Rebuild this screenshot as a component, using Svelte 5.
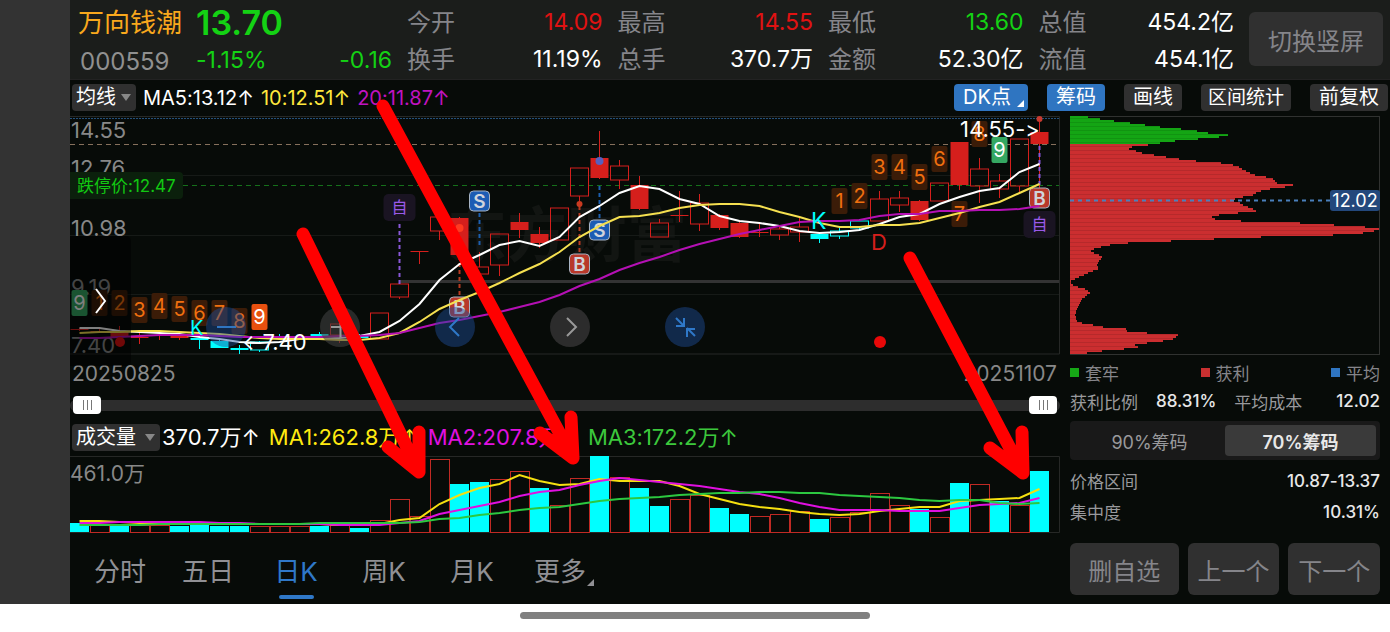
<style>
  :global(body) {
    margin: 0;
    background: #fff;
  }

  .page {
    font-family: Inter, "Noto Sans CJK SC", sans-serif;
    font-variant-ligatures: none;
    color: #fff;
  }

  .page button,
  .page select {
    font-family: inherit;
    border: none;
    margin: 0;
    padding: 0;
    color: #fff;
    background: #303030;
    white-space: nowrap;
  }

  .screen {
    display: flex;
    background: #333;
    padding-left: 70px;
  }

  .app {
    position: relative;
    flex: 1;
    min-width: 0;
    background: #070b08;
  }

  .header {
    display: grid;
    grid-template-columns: 103px 196px repeat(4, 1fr) 134px;
    column-gap: 15px;
    height: 80px;
    box-sizing: border-box;
    padding: 4px 7px 0 8px;
    background: #1b1d1b;
    border-bottom: 1px solid #222;
    font-size: 23px;
    line-height: 37px;
    white-space: nowrap;
  }

  .header dl,
  .header dd {
    margin: 0;
  }

  .header dl div,
  .change {
    display: flex;
    justify-content: space-between;
  }

  .header dt {
    color: #85858a;
    font-size: 24px;
  }

  .name {
    color: #f9a81d;
    font-size: 26px;
  }

  .code {
    padding: 2px 0 0 2px;
    color: #909090;
    font-size: 24px;
  }

  .price {
    font-size: 34px;
    font-weight: 600;
  }

  .down {
    color: #14d214;
  }

  .change {
    padding-top: 1px;
  }

  .up {
    color: #e01212;
  }

  .page .switch {
    height: 54px;
    margin-top: 8px;
    border-radius: 6px;
    color: #85858a;
    font-size: 24px;
  }

  .toolbar {
    display: flex;
    align-items: center;
    gap: 19px;
    height: 35px;
    padding: 0 2px;
    font-size: 20px;
  }

  .averages {
    display: flex;
    align-items: center;
    gap: 7px;
    flex: 1;
    white-space: nowrap;
  }

  .picker {
    position: relative;
    display: flex;
  }

  .picker select {
    appearance: none;
    height: 27px;
    padding: 0 20px 0 4px;
    border-radius: 4px;
    font-size: 20px;
    line-height: 27px;
  }

  .picker::after {
    content: "";
    position: absolute;
    right: 5px;
    top: 10px;
    border: 5px solid transparent;
    border-top: 7px solid #888;
    border-bottom: none;
    pointer-events: none;
  }

  .yellow {
    color: #ffe83d;
  }

  .magenta {
    color: #c013c0;
  }

  .toolbar > button {
    position: relative;
    height: 27px;
    padding: 0 9px;
    border-radius: 4px;
    font-size: 20px;
    line-height: 27px;
  }

  .toolbar > button.wide {
    padding: 0 7px;
    font-size: 19px;
  }

  .toolbar > button.active {
    background: #2f75c1;
  }

  .toolbar > button.corner {
    padding-right: 17px;
  }

  .corner::after {
    content: "";
    position: absolute;
    right: 4px;
    bottom: 4px;
    border-left: 7px solid transparent;
    border-bottom: 7px solid currentColor;
  }

  .content {
    display: grid;
    grid-template-columns: 1fr 330px;
  }

  .main {
    min-width: 0;
  }

  svg {
    display: block;
  }

  .chart {
    position: relative;
  }

  .chart > svg,
  .volume,
  .chips {
    width: 100%;
  }

  .axis {
    fill: #888;
    font-size: 22px;
  }

  .axis.small {
    font-size: 21px;
  }

  .watermark {
    fill: #121512;
    font-size: 60px;
    font-weight: 700;
  }

  .mark {
    font-size: 22px;
  }

  .badge {
    font-size: 20px;
    text-anchor: middle;
  }

  .signal {
    font-size: 19px;
    font-weight: 600;
    text-anchor: middle;
  }

  .line {
    fill: none;
    stroke-width: 2;
  }

  .page .expand {
    position: absolute;
    left: 0;
    top: 44%;
    width: 61px;
    height: 130px;
    padding-left: 22px;
    border-radius: 0 5px 5px 0;
    background: rgba(0, 0, 0, 0.5);
  }

  .chart-nav {
    position: absolute;
    left: 13.7%;
    top: 192px;
    width: 50.4%;
    display: flex;
    justify-content: space-between;
  }

  .chart-nav button {
    width: 40px;
    height: 40px;
    border-radius: 50%;
    background: #2c2c2c;
  }

  .chart-nav button.blue {
    background: rgba(30, 78, 155, 0.45);
  }

  .chart-nav button.dim {
    background: rgba(64, 64, 64, 0.6);
  }

  .range {
    position: relative;
    height: 30px;
  }

  .range::before {
    content: "";
    position: absolute;
    left: 0;
    right: 0;
    top: 10px;
    height: 11px;
    border-radius: 6px;
    background: #2d2d2d;
  }

  .range input {
    appearance: none;
    position: absolute;
    left: 3px;
    top: 0;
    width: calc(100% - 6px);
    height: 30px;
    margin: 0;
    background: none;
    pointer-events: none;
  }

  .range input::-webkit-slider-thumb {
    appearance: none;
    width: 28px;
    height: 18px;
    border-radius: 4px;
    background: repeating-linear-gradient(90deg, #777 0 1px, #fff 1px 4px) 10px 4px / 9px 10px no-repeat #fff;
    pointer-events: auto;
  }

  .vol-head {
    display: flex;
    align-items: center;
    gap: 9px;
    height: 35px;
    box-sizing: border-box;
    padding: 0 2px 1px;
    font-size: 22px;
    line-height: 30px;
    white-space: nowrap;
  }

  .vol-head .picker {
    margin-right: -7px;
  }

  .vol-head .picker select {
    padding-right: 24px;
  }

  .vol-head .yellow {
    color: #ffea10;
  }

  .vol-head .magenta {
    color: #e010e0;
  }

  .vol-head .green {
    color: #3cc83c;
  }

  .tabs {
    display: flex;
    height: 70px;
    padding-left: 6px;
  }

  .tabs button {
    position: relative;
    width: 88px;
    background: none;
    color: #909094;
    font-size: 26px;
  }

  .tabs button.active {
    color: #2f78c8;
  }

  .tabs button.active::before {
    content: "";
    position: absolute;
    left: 27px;
    bottom: 5px;
    width: 35px;
    height: 4px;
    border-radius: 2px;
    background: #2f78c8;
  }

  .tabs .corner::after {
    right: 10px;
    bottom: 18px;
  }

  .side {
    padding: 0 10px;
    font-size: 17px;
    white-space: nowrap;
  }

  .legend,
  .row {
    display: flex;
    align-items: center;
    justify-content: space-between;
    color: #99999c;
  }

  .legend {
    height: 34px;
    color: #85858a;
  }

  .legend span {
    display: flex;
    align-items: center;
    gap: 6px;
  }

  .legend i {
    width: 9px;
    height: 9px;
    background: #16a816;
  }

  .legend i.red {
    background: #c83030;
  }

  .legend i.blue {
    background: #2f75c1;
  }

  .row {
    height: 31px;
  }

  .row.first {
    height: 24px;
    gap: 18px;
  }

  .row b {
    color: #e8e8e8;
    font-weight: 500;
  }

  .row b:last-child {
    margin-left: auto;
  }

  .segmented {
    display: flex;
    margin: 8px 0 5px;
    padding: 4px;
    border-radius: 4px;
    background: #191919;
  }

  .segmented button {
    flex: 1;
    height: 31px;
    border-radius: 4px;
    background: none;
    color: #99999c;
    font-size: 18px;
  }

  .segmented button.active {
    background: #3a3a3a;
    color: #e8e8e8;
    font-weight: 600;
  }

  .actions {
    display: grid;
    grid-template-columns: 109fr 92fr 92fr;
    gap: 9px;
    margin-top: 16px;
  }

  .actions button {
    height: 52px;
    border-radius: 6px;
    color: #85858a;
    font-size: 24px;
  }

  .arrows {
    position: absolute;
    left: 0;
    top: 0;
    width: 100%;
    fill: none;
    stroke: #f00;
    stroke-width: 13;
    stroke-linecap: round;
    stroke-linejoin: round;
    pointer-events: none;
  }

  .home {
    display: flex;
    justify-content: center;
    height: 28px;
  }

  .home div {
    width: 350px;
    height: 7px;
    margin-top: 8px;
    border-radius: 4px;
    background: #808080;
  }
</style>

<script>
  const STEP = 20;
  const START = 79.5;
  const RED = '#d51f1c';
  const CYAN = '#00ffff';

  let period = '日K';
  let share = 70;

  const periods = ['分时', '五日', '日K', '周K', '月K', '更多'];

  const quotes = [
    [['今开', '14.09', 'up'], ['换手', '11.19%', '']],
    [['最高', '14.55', 'up'], ['总手', '370.7万', '']],
    [['最低', '13.60', 'down'], ['金额', '52.30亿', '']],
    [['总值', '454.2亿', ''], ['流值', '454.1亿', '']]
  ];

  // high, top, bottom, low, kind (upper case is filled, c is cyan)
  const candles = [
    [328, 329, 330, 331, 'R'], [329, 331, 332, 333, 'R'], [326, 331, 337, 340, 'R'], [333, 337, 338, 344, 'R'],
    [330, 335, 336, 340, 'R'], [333, 335, 338, 340, 'R'], [333, 338, 340, 349, 'C'], [340, 341, 348, 348, 'C'],
    [345, 348, 350, 354, 'C'], [341, 342, 350, 352, 'c'], [334, 336, 338, 339, 'C'], [334, 336, 337, 338, 'R'],
    [332, 334, 336, 337, 'C'], [323, 324, 335, 343, 'r'], [334, 336, 338, 339, 'C'], [313, 313, 339, 339, 'r'],
    [284, 284, 297, 299, 'r'], [251, 251, 252, 264, 'R'], [217, 217, 231, 240, 'r'], [217, 218, 255, 256, 'R'],
    [252, 267, 274, 275, 'r'], [234, 234, 265, 276, 'r'], [213, 222, 230, 238, 'R'], [227, 234, 243, 248, 'R'],
    [208, 208, 240, 240, 'r'], [168, 168, 196, 204, 'r'], [131, 158, 178, 179, 'R'], [160, 166, 180, 189, 'r'],
    [176, 185, 209, 210, 'R'], [219, 223, 237, 237, 'r'], [191, 215, 216, 222, 'R'], [194, 203, 224, 231, 'r'],
    [214, 215, 228, 230, 'R'], [222, 223, 237, 238, 'R'], [224, 232, 233, 237, 'R'], [226, 229, 235, 240, 'r'],
    [218, 227, 232, 242, 'r'], [232, 234, 239, 243, 'C'], [226, 231, 236, 239, 'c'], [219, 221, 228, 231, 'c'],
    [191, 199, 221, 221, 'r'], [191, 198, 205, 212, 'r'], [200, 201, 220, 221, 'R'], [183, 183, 201, 201, 'r'],
    [142, 142, 185, 190, 'R'], [158, 169, 186, 203, 'r'], [174, 181, 189, 198, 'r'], [139, 139, 186, 192, 'r'],
    [119, 132, 144, 188, 'R']
  ];

  const ma5 = [328, 328, 331, 332, 333, 334, 337, 339, 342, 343, 342, 339, 339, 338, 336, 332, 321, 304, 280, 264, 255, 245, 241, 246, 237, 217, 206, 193, 186, 189, 199, 204, 216, 221, 223, 226, 231, 233, 232, 230, 224, 217, 214, 204, 197, 191, 188, 172, 164];
  const ma10 = [333, 332, 332, 331, 331, 332, 333, 334, 336, 338, 339, 339, 339, 340, 340, 338, 333, 322, 309, 300, 292, 283, 273, 264, 252, 237, 226, 217, 216, 213, 208, 205, 204, 204, 206, 212, 217, 223, 227, 227, 225, 225, 223, 218, 213, 207, 202, 193, 184];
  const ma20 = [338, 338, 337, 336, 335, 335, 335, 336, 337, 337, 337, 337, 337, 336, 336, 335, 333, 328, 323, 320, 316, 312, 307, 302, 295, 286, 279, 270, 263, 257, 250, 244, 239, 234, 230, 226, 222, 221, 221, 220, 216, 214, 214, 211, 211, 210, 210, 209, 206];

  const volumes = [523, 525, 525, 525, 525, 526, 524, 526, 526, 526, 526, 526, 526, 525, 528, 520, 499, 516, 459, 484, 482, 479, 471, 488, 505, 478, 456, 477, 488, 506, 499, 495, 508, 514, 516, 514, 511, 519, 517, 512, 493, 505, 509, 517, 483, 484, 501, 505, 471];
  const falling = [0, 2, 5, 6, 7, 8, 12, 14, 19, 20, 23, 26, 28, 29, 32, 33, 37, 42, 44, 46, 48];
  const vma1 = [521, 521, 522, 523, 524, 524, 524, 524, 524, 524, 524, 524, 524, 525, 525, 524, 520, 518, 504, 495, 488, 484, 475, 481, 485, 484, 479, 481, 481, 481, 486, 494, 499, 504, 507, 509, 512, 514, 515, 514, 511, 509, 507, 507, 501, 500, 499, 498, 489];
  const vma2 = [523, 523, 522, 522, 522, 522, 522, 523, 523, 524, 524, 524, 524, 525, 525, 525, 523, 521, 514, 510, 506, 502, 496, 492, 490, 485, 481, 478, 480, 482, 484, 486, 489, 492, 494, 498, 503, 507, 510, 510, 510, 511, 511, 511, 508, 505, 504, 503, 498];
  const vma3 = [525, 525, 525, 525, 524, 524, 524, 524, 524, 524, 524, 524, 523, 523, 523, 523, 523, 522, 519, 518, 515, 513, 510, 508, 507, 504, 501, 499, 498, 497, 495, 494, 493, 493, 492, 492, 493, 493, 495, 496, 497, 498, 500, 501, 500, 500, 503, 504, 503];

  // x, centre y, digit, style
  const counts = [
    [79.5, 303, 9, 'green'], [99.5, 303, 1], [119.5, 303, 2], [139.5, 310, 3], [159.5, 306, 4], [179.5, 309, 5],
    [199.5, 313, 6], [219.5, 313, 7], [239.5, 321, 8], [259.5, 317, 9, 'hot'],
    [839.5, 201, 1], [859.5, 196, 2], [879.5, 167, 3], [899.5, 167, 4], [919.5, 177, 5], [939.5, 159, 6],
    [959.5, 214, 7], [979.5, 134, 8], [999.5, 150, 9, 'green']
  ];

  const signals = [
    [479.5, 201, 'S'], [599.5, 230, 'S'], [459.5, 307, 'B'], [579.5, 264, 'B'], [1039.5, 198, 'B']
  ];

  const dashes = [
    [479.5, 213, 246, '#1c5fae'], [599.5, 186, 220, '#1c5fae'], [459.5, 228, 296, '#b83a20'],
    [579.5, 206, 254, '#b83a20'], [399.5, 224, 284, '#8a58d8'], [1039.5, 146, 188, '#8a58d8']
  ];

  const notes = [[399.5, 207], [1039.5, 224]];

  // width of the distribution at a given depth
  const profile = [
    [13, 0], [23, 2], [36, 4], [60, 7], [90, 11], [121, 14], [138, 17], [158, 19], [140, 21], [105, 24], [90, 26],
    [78, 28], [66, 29], [54, 32], [63, 34], [72, 37], [90, 40], [109, 43], [126, 45], [145, 46], [157, 48], [168, 50],
    [172, 53], [178, 56], [185, 59], [202, 62], [207, 67], [223, 69], [200, 72], [187, 75], [183, 78], [168, 81],
    [160, 84], [168, 86], [173, 89], [186, 94], [168, 96], [149, 98], [138, 101], [145, 103], [171, 105], [213, 106],
    [247, 108], [281, 110], [295, 111], [309, 113], [293, 116], [263, 118], [215, 119], [167, 121], [121, 123],
    [80, 125], [58, 126], [40, 128], [31, 130], [21, 133], [21, 136], [32, 140], [27, 147], [28, 152], [18, 156],
    [7, 161], [1, 164], [1, 168], [8, 171], [15, 173], [20, 176], [12, 182], [7, 191], [5, 199], [7, 206], [23, 209],
    [33, 211], [56, 213], [58, 216], [95, 218], [108, 219], [101, 223], [77, 226], [63, 228], [68, 231], [40, 233],
    [17, 236], [7, 238]
  ];

  function widthAt(y) {
    const i = profile.findIndex(p => p[1] >= y);
    if (i <= 0) {
      return profile[0][0];
    }
    const [w1, y1] = profile[i];
    const [w0, y0] = profile[i - 1];
    return w0 + (w1 - w0) * (y - y0) / (y1 - y0);
  }

  const levels = Array.from({ length: 119 }, (_, i) => {
    const y = i * 2;
    return { y, w: Math.round(Math.max(widthAt(y), widthAt(y + 1))) };
  });

  const cx = i => START + i * STEP;
  const points = list => list.map((y, i) => `${cx(i)},${y}`).join(' ');
  const isFilled = kind => kind === kind.toUpperCase();
  const tint = kind => kind.toLowerCase() === 'c' ? CYAN : RED;
  const countFill = { green: '#35a862', hot: '#e8500f' };
</script>

<div class="page">
  <div class="screen">
    <div class="app">
      <div class="header">
        <div>
          <div class="name">万向钱潮</div>
          <div class="code">000559</div>
        </div>
        <div class="down">
          <div class="price">13.70</div>
          <div class="change"><span>-1.15%</span><span>-0.16</span></div>
        </div>
        {#each quotes as column}
          <dl>
            {#each column as [label, value, tone]}
              <div>
                <dt>{label}</dt>
                <dd class={tone}>{value}</dd>
              </div>
            {/each}
          </dl>
        {/each}
        <button class="switch">切换竖屏</button>
      </div>

      <div class="toolbar">
        <div class="averages">
          <div class="picker">
            <select aria-label="均线">
              <option>均线</option>
            </select>
          </div>
          <span>MA5:13.12↑</span>
          <span class="yellow">10:12.51↑</span>
          <span class="magenta">20:11.87↑</span>
        </div>
        <button class="active corner">DK点</button>
        <button class="active">筹码</button>
        <button>画线</button>
        <button class="wide">区间统计</button>
        <button>前复权</button>
      </div>

      <div class="content">
        <div class="main">
          <div class="chart">
            <svg viewBox="70 115 990 275">
              <text class="watermark" x="447" y="257">东方财富</text>
              <g stroke="#161a17">
                <path d="M70 175.5H1059M70 235.5H1059M70 294.5H1059" />
                <path d="M70 116.5H1059.500V354H70" fill="none" stroke="#262826" />
              </g>
              <path d="M400 281.500H1059" stroke="#333" stroke-width="3" />
              <path d="M70 118.500H1059" stroke="#24507a" stroke-dasharray="2 1" />
              <path d="M70 144.500H1059" stroke="#86705c" stroke-dasharray="5 4" />
              <path d="M183 185.500H1059" stroke="#15701a" stroke-dasharray="5 4" />

              <g class="axis">
                <text x="71" y="138">14.55</text>
                <text x="71" y="176">12.76</text>
                <text x="71" y="236">10.98</text>
                <text x="71" y="295">9.19</text>
                <text x="71" y="353">7.40</text>
              </g>
              <g class="axis small">
                <text x="72" y="381">20250825</text>
                <text x="1057" y="381" text-anchor="end">20251107</text>
              </g>

              <rect x="66" y="172" width="117" height="27" rx="4" fill="#0b200c" />
              <text x="77" y="192" font-size="17" fill="#12c812">跌停价:12.47</text>

              {#each candles as [high, top, bottom, low, kind], i}
                <path d="M{cx(i)} {high}V{top}M{cx(i)} {bottom}V{low}" stroke={tint(kind)} />
                <rect
                  x={cx(i) - 9} y={top} width="18" height={bottom - top}
                  fill={isFilled(kind) ? tint(kind) : 'none'}
                  stroke={isFilled(kind) ? 'none' : tint(kind)}
                />
              {/each}

              {#each dashes as [x, y1, y2, color]}
                <path d="M{x} {y1}V{y2}" stroke={color} stroke-width="2" stroke-dasharray="4 3" />
              {/each}
              <circle cx="459.500" cy="228" r="4" fill="#ff3a20" />
              <circle cx="579.500" cy="204" r="3" fill="#c83a20" />
              <circle cx="599.500" cy="161" r="4" fill="#5560c0" />
              <circle cx="1039.500" cy="119" r="3" fill="#c83a30" />

              {#each counts as [x, y, digit, look]}
                <rect x={x - 8} y={y - 13} width="16" height="26" rx="2" fill={countFill[look] || '#3b1c08'} />
                <text class="badge" {x} y={y + 7} fill={look ? '#fff' : '#f0700f'}>{digit}</text>
              {/each}

              {#each signals as [x, y, letter]}
                <rect
                  x={x - 10} y={y - 10} width="20" height="20" rx="4"
                  fill={letter === 'S' ? '#1c5cb4' : '#b8382a'} stroke="#a8b4c4"
                />
                <text class="signal" {x} y={y + 7} fill="#d0d4dc">{letter}</text>
              {/each}

              {#each notes as [x, y]}
                <rect x={x - 16} y={y - 13} width="32" height="27" rx="5" fill="#1a1422" />
                <text {x} y={y + 6} font-size="16" fill="#9a5ae8" text-anchor="middle">自</text>
              {/each}

              <polyline class="line" points={points(ma5)} stroke="#fff" />
              <polyline class="line" points={points(ma10)} stroke="#f5e050" />
              <polyline class="line" points={points(ma20)} stroke="#b410b4" />

              <circle cx="120" cy="342" r="5" fill="#e01010" />
              <circle cx="880" cy="342" r="6" fill="#e80808" />
              <g class="mark">
                <text x="190" y="335" font-size="20" fill={CYAN}>K</text>
                <text x="811" y="229" font-size="23" fill={CYAN}>K</text>
                <text x="871" y="250" fill={RED}>D</text>
                <text x="960" y="137" fill="#fff">14.55-&gt;</text>
                <text x="242" y="350" fill="#fff">←7.40</text>
              </g>
            </svg>

            <button class="expand" aria-label="展开">
              <svg width="16" height="28" fill="none" stroke="#fff" stroke-width="2"><path d="M4 2l9 12-9 12" /></svg>
            </button>
            <div class="chart-nav">
              <button class="blue" aria-label="缩小">
                <svg width="40" height="40" stroke="#2f75c1" stroke-width="2"><path d="M11 20h19" /></svg>
              </button>
              <button class="dim" aria-label="放大">
                <svg width="40" height="40" stroke="#999" stroke-width="2"><path d="M11 20h19M20.500 11v19" /></svg>
              </button>
              <button class="blue" aria-label="左移">
                <svg width="40" height="40" fill="none" stroke="#2f78c8" stroke-width="2"><path d="M24 11l-9 9 9 9" /></svg>
              </button>
              <button aria-label="右移">
                <svg width="40" height="40" fill="none" stroke="#999" stroke-width="2"><path d="M17 11l9 9-9 9" /></svg>
              </button>
              <button class="blue" aria-label="收起">
                <svg width="40" height="40" fill="none" stroke="#2f78c8" stroke-width="2">
                  <path d="M11 11l8 8M11 19h8v-8M30 29l-8-8M22 30v-8h8" />
                </svg>
              </button>
            </div>
          </div>

          <div class="range">
            <input type="range" aria-label="开始日期" value="0" />
            <input type="range" aria-label="结束日期" value="100" />
          </div>

          <div class="vol-head">
            <div class="picker">
              <select aria-label="指标">
                <option>成交量</option>
              </select>
            </div>
            <span>370.7万↑</span>
            <span class="yellow">MA1:262.8万↑</span>
            <span class="magenta">MA2:207.8万↑</span>
            <span class="green">MA3:172.2万↑</span>
          </div>

          <svg class="volume" viewBox="70 455 990 79">
            <path d="M70 456.500H1059.500V532.500H70" fill="none" stroke="#262826" />
            <text class="axis small" x="70" y="481">461.0万</text>
            {#each volumes as top, i}
              {#if falling.includes(i)}
                <rect x={cx(i) - 9.5} y={top} width="19" height={532 - top} fill={CYAN} />
              {:else}
                <rect x={cx(i) - 9} y={top + 0.5} width="19" height={532 - top} fill="none" stroke="#c02a24" />
              {/if}
            {/each}
            <polyline class="line" points={points(vma1)} stroke="#f5e010" />
            <polyline class="line" points={points(vma2)} stroke="#e010e0" />
            <polyline class="line" points={points(vma3)} stroke="#2cc840" />
          </svg>

          <div class="tabs">
            {#each periods as name}
              <button
                class:active={period === name}
                class:corner={name === '更多'}
                on:click={() => period = name}
              >{name}</button>
            {/each}
          </div>
        </div>

        <div class="side">
          <svg class="chips" viewBox="0 -1 310 240">
            <rect x="0.500" y="0.500" width="309" height="238" fill="none" stroke="#303230" />
            <g shape-rendering="crispEdges">
              {#each levels as { y, w }, i}
                <rect {y} width={w} height="2" fill={y < 28 ? '#14a514' : '#cb2e30'} />
                {#if i % 2}
                  <rect {y} width={w} height="1" fill="rgba(0, 0, 0, 0.1)" />
                {/if}
              {/each}
            </g>
            <path d="M0 84.500H260" stroke="#4a80bc" stroke-width="2" stroke-dasharray="4 4" />
            <rect x="260" y="74" width="50" height="21" rx="3" fill="#23487c" />
            <text x="285" y="91" font-size="18" fill="#fff" text-anchor="middle">12.02</text>
          </svg>

          <div class="legend">
            <span><i></i>套牢</span>
            <span><i class="red"></i>获利</span>
            <span><i class="blue"></i>平均</span>
          </div>
          <div class="row first">
            <span>获利比例</span><b>88.31%</b>
            <span>平均成本</span><b>12.02</b>
          </div>
          <div class="segmented">
            <button class:active={share === 90} on:click={() => share = 90}>90%筹码</button>
            <button class:active={share === 70} on:click={() => share = 70}>70%筹码</button>
          </div>
          <div class="row"><span>价格区间</span><b>10.87-13.37</b></div>
          <div class="row"><span>集中度</span><b>10.31%</b></div>
          <div class="actions">
            <button>删自选</button>
            <button>上一个</button>
            <button>下一个</button>
          </div>
        </div>
      </div>

      <svg class="arrows" viewBox="70 0 1320 604">
        <path d="M303 234L419 472M388 447L419 472V432" />
        <path d="M383 106L573 458M540 433L573 458L571 417" />
        <path d="M910 258L1023 473M990 448L1023 473L1022 432" />
      </svg>
    </div>
  </div>
  <div class="home"><div></div></div>
</div>
